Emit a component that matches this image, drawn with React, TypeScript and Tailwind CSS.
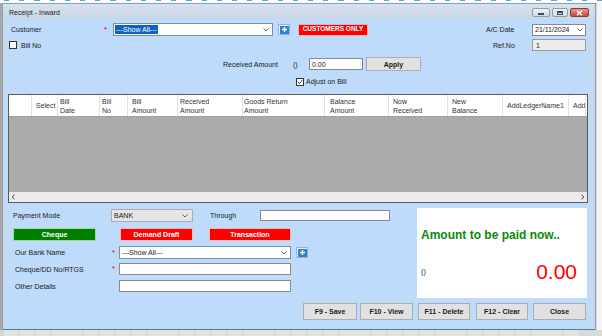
import React from "react";

const Chevron = () => (
  <svg width="6" height="4" viewBox="0 0 6 4" className="shrink-0">
    <path d="M0.5 0.5 L3 3 L5.5 0.5" fill="none" stroke="#555" strokeWidth="0.9" />
  </svg>
);

const PlusBtn = () => (
  <div className="w-[12px] h-[11px] border border-[#9fb4cc] bg-[#e8f0f8] flex items-center justify-center shrink-0">
    <div className="w-[9px] h-[8px] bg-[#2f7fd6] flex items-center justify-center">
      <svg width="7" height="7" viewBox="0 0 7 7">
        <path d="M3.5 1 V6 M1 3.5 H6" stroke="#fff" strokeWidth="1.4" />
      </svg>
    </div>
  </div>
);

const Check = ({ checked }: { checked?: boolean }) => (
  <div className="w-[8px] h-[8px] border border-[#333] bg-white shrink-0 flex items-center justify-center">
    {checked && (
      <svg width="6" height="6" viewBox="0 0 6 6">
        <path d="M0.8 3 L2.4 4.6 L5.2 1.2" fill="none" stroke="#222" strokeWidth="0.9" />
      </svg>
    )}
  </div>
);

const GrayBtn = ({ label, w, ml }: { label: string; w: string; ml: string }) => (
  <div
    className={`${w} ${ml} h-[17px] bg-[#e1e1e1] border border-[#adadad] flex items-center justify-center font-bold text-[7px] text-[#1a1a1a] shrink-0`}
  >
    {label}
  </div>
);

const cols: { t: string[]; w: string; pl: string }[] = [
  { t: [""], w: "w-[23px]", pl: "pl-[0px]" },
  { t: ["Select"], w: "w-[26px]", pl: "pl-[4px]" },
  { t: ["Bill", "Date"], w: "w-[42px]", pl: "pl-[2px]" },
  { t: ["Bill", "No"], w: "w-[28px]", pl: "pl-[2px]" },
  { t: ["Bill", "Amount"], w: "w-[50px]", pl: "pl-[4px]" },
  { t: ["Received", "Amount"], w: "w-[65px]", pl: "pl-[2px]" },
  { t: ["Goods Return", "Amount"], w: "w-[82px]", pl: "pl-[1px]" },
  { t: ["Balance", "Amount"], w: "w-[64px]", pl: "pl-[5px]" },
  { t: ["Now", "Received"], w: "w-[59px]", pl: "pl-[4px]" },
  { t: ["New", "Balance"], w: "w-[55px]", pl: "pl-[4px]" },
  { t: ["AddLedgerName1"], w: "w-[66px]", pl: "pl-[4px]" },
  { t: ["Add"], w: "w-[17px]", pl: "pl-[4px]" },
];

export default function App() {
  return (
    <div className="w-[602px] h-[336px] overflow-hidden bg-[#eeeeee] flex flex-col font-['Liberation_Sans',Arial,sans-serif] text-[7px] leading-none text-[#1a1a1a]">
      {/* top desktop strip */}
      <div className="h-[3px] bg-white flex gap-[10px] pl-[4px] shrink-0">
        {Array.from({ length: 40 }).map((_, i) => (
          <div key={i} className="w-[6px] h-[1px] bg-[#39b4e0]" />
        ))}
      </div>
      <div className="flex h-[327px] shrink-0">
        <div className="w-[2px] bg-[#a9a9a9]" />
        {/* window */}
        <div className="w-[594px] h-[327px] bg-[#c6daee] border border-[#8c9db1] border-b-[#2f8c9e] flex flex-col">
          {/* title bar */}
          <div className="h-[15px] flex items-start bg-gradient-to-b from-[#d6e2ee] to-[#c8d7e8] shrink-0">
            <div className="pl-[6px] pt-[5px] text-[7px] text-[#222]">Receipt - Inward</div>
            <div className="ml-auto mr-[6px] pt-[4px] flex">
              <div className="w-[18px] h-[9px] rounded-[2px] border border-[#8e9cb0] bg-gradient-to-b from-[#eef3f9] to-[#cdd9e6] flex items-center justify-center">
                <div className="w-[6px] h-[2px] bg-[#3c4a5c] mt-[2px]" />
              </div>
              <div className="ml-[2px] w-[16px] h-[9px] rounded-[2px] border border-[#8e9cb0] bg-gradient-to-b from-[#eef3f9] to-[#cdd9e6] flex items-center justify-center">
                <div className="w-[6px] h-[4px] border border-[#3c4a5c] border-t-2" />
              </div>
              <div className="ml-[2px] w-[19px] h-[9px] rounded-[2px] border border-[#8a3a3a] bg-gradient-to-b from-[#e39a8e] to-[#c6473a] flex items-center justify-center">
                <svg width="7" height="6" viewBox="0 0 7 6">
                  <path d="M1 0.8 L6 5.2 M6 0.8 L1 5.2" stroke="#fff" strokeWidth="1.5" />
                </svg>
              </div>
            </div>
          </div>
          {/* client */}
          <div className="ml-[4px] mr-[5px] h-[309px] bg-[#bedbfc] flex flex-col shrink-0">
            {/* row 1 */}
            <div className="mt-[4px] h-[13px] flex items-center">
              <div className="pl-[4px] w-[97px]">Customer</div>
              <div className="w-[9px] text-[#e00] text-[8px]">*</div>
              <div className="w-[160px] h-[13px] bg-white border border-[#7a8ea6] flex items-center pl-[1px] pr-[3px]">
                <span className="bg-[#0a62c9] text-white px-[1px] h-[9px] flex items-center">---Show All---</span>
                <span className="ml-auto"><Chevron /></span>
              </div>
              <div className="ml-[5px]"><PlusBtn /></div>
              <div className="ml-[8px] w-[70px] h-[12px] bg-[#ff0000] border border-[#ffb0b0] text-white font-bold text-[6.5px] flex items-center justify-center">
                CUSTOMERS ONLY
              </div>
              <div className="ml-auto w-[46px]">A/C Date</div>
              <div className="w-[54px] h-[12px] bg-white border border-[#8a8a8a] mr-[4px] flex items-center pl-[2px] pr-[2px]">
                <span>21/11/2024</span>
                <span className="ml-auto"><Chevron /></span>
              </div>
            </div>
            {/* row 2 */}
            <div className="mt-[3px] h-[12px] flex items-center">
              <div className="ml-[2px]"><Check /></div>
              <div className="ml-[4px]">Bill No</div>
              <div className="ml-auto w-[46px] pl-[7px]">Ref.No</div>
              <div className="w-[54px] h-[12px] bg-[#ececec] border border-[#9a9a9a] mr-[4px] flex items-center pl-[3px]">1</div>
            </div>
            {/* row 3 */}
            <div className="mt-[6px] h-[14px] flex items-center">
              <div className="ml-[216px] w-[70px]">Received Amount</div>
              <div className="w-[16px]">()</div>
              <div className="w-[54px] h-[12px] bg-white border border-[#8a8a8a] flex items-center pl-[2px]">0.00</div>
              <div className="ml-[3px] w-[55px] h-[14px] bg-[#e1e1e1] border border-[#adadad] flex items-center justify-center font-bold">Apply</div>
            </div>
            {/* row 4 */}
            <div className="mt-[6px] h-[9px] flex items-center">
              <div className="ml-[289px]"><Check checked /></div>
              <div className="ml-[2px]">Adjust on Bill</div>
            </div>
            {/* grid */}
            <div className="mt-[8px] ml-[1px] w-[580px] h-[109px] border border-[#5a5a5a] flex flex-col overflow-hidden">
              <div className="h-[22px] bg-white flex border-b border-[#a0a0a0] shrink-0 overflow-hidden">
                {cols.map((c, i) => (
                  <div
                    key={i}
                    className={`${c.w} ${c.pl} shrink-0 h-full flex flex-col justify-center text-[#333] border-r border-[#e2e2e2] leading-[9px] whitespace-nowrap overflow-hidden`}
                  >
                    {c.t.map((l, j) => (
                      <div key={j}>{l}</div>
                    ))}
                  </div>
                ))}
              </div>
              <div className="flex-1 bg-[#ababab]" />
              <div className="h-[10px] bg-[#ececec] flex items-center justify-between px-[2px] shrink-0">
                <svg width="5" height="6" viewBox="0 0 5 6"><path d="M3.5 0.8 L1.2 3 L3.5 5.2" fill="none" stroke="#333" strokeWidth="1" /></svg>
                <svg width="5" height="6" viewBox="0 0 5 6"><path d="M1.5 0.8 L3.8 3 L1.5 5.2" fill="none" stroke="#333" strokeWidth="1" /></svg>
              </div>
            </div>
            {/* bottom section */}
            <div className="mt-[5px] flex">
              <div className="w-[410px] flex flex-col">
                <div className="mt-[1px] h-[13px] flex items-center">
                  <div className="pl-[6px] w-[104px]">Payment Mode</div>
                  <div className="w-[82px] h-[13px] bg-[#e5e5e5] border border-[#acacac] flex items-center pl-[2px] pr-[4px]">
                    <span>BANK</span>
                    <span className="ml-auto"><Chevron /></span>
                  </div>
                  <div className="ml-[17px] w-[50px]">Through</div>
                  <div className="w-[130px] h-[11px] bg-white border border-[#8a8a8a]" />
                </div>
                <div className="mt-[6px] h-[13px] flex items-center">
                  <div className="ml-[6px] w-[83px] h-[13px] bg-[#008000] border border-[#9fd89f] text-white font-bold flex items-center justify-center">Cheque</div>
                  <div className="ml-[24px] w-[73px] h-[13px] bg-[#ff0000] border border-[#ffb3b3] text-white font-bold flex items-center justify-center">Demand Draft</div>
                  <div className="ml-[16px] w-[82px] h-[13px] bg-[#ff0000] border border-[#ffb3b3] text-white font-bold flex items-center justify-center">Transaction</div>
                </div>
                <div className="mt-[5px] h-[13px] flex items-center">
                  <div className="pl-[8px] w-[105px]">Our Bank Name</div>
                  <div className="w-[7px] text-[#e00] text-[8px]">*</div>
                  <div className="w-[172px] h-[13px] bg-white border border-[#7a8ea6] flex items-center pl-[2px] pr-[3px]">
                    <span>---Show All---</span>
                    <span className="ml-auto"><Chevron /></span>
                  </div>
                  <div className="ml-[5px]"><PlusBtn /></div>
                </div>
                <div className="mt-[4px] h-[12px] flex items-center">
                  <div className="pl-[8px] w-[105px]">Cheque/DD No/RTGS</div>
                  <div className="w-[7px] text-[#e00] text-[8px]">*</div>
                  <div className="w-[172px] h-[12px] bg-white border border-[#8a8a8a]" />
                </div>
                <div className="mt-[5px] h-[12px] flex items-center">
                  <div className="pl-[8px] w-[112px]">Other Details</div>
                  <div className="w-[172px] h-[12px] bg-white border border-[#8a8a8a]" />
                </div>
              </div>
              <div className="w-[170px] h-[90px] bg-white flex flex-col pl-[4px] pr-[10px]">
                <div className="mt-[21px] text-[12px] font-bold text-[#0a8a0a] leading-[12px]">Amount to be paid now..</div>
                <div className="mt-[19px] flex items-center h-[24px]">
                  <span className="text-[7.5px] text-[#222]">()</span>
                  <span className="ml-auto text-[21px] text-[#ff0000] leading-[24px]">0.00</span>
                </div>
              </div>
            </div>
            {/* buttons */}
            <div className="mt-[5px] flex">
              <GrayBtn label="F9 - Save" w="w-[54px]" ml="ml-[296px]" />
              <GrayBtn label="F10 - View" w="w-[53px]" ml="ml-[3px]" />
              <GrayBtn label="F11 - Delete" w="w-[52px]" ml="ml-[5px]" />
              <GrayBtn label="F12 - Clear" w="w-[52px]" ml="ml-[6px]" />
              <GrayBtn label="Close" w="w-[53px]" ml="ml-[5px]" />
            </div>
          </div>
        </div>
        <div className="w-[6px] bg-[#f4f4f4] border-l border-[#d8d8d8]" />
      </div>
      {/* bottom desktop strip */}
      <div className="h-[6px] flex gap-[2px] bg-[#d9d9d9] pl-[4px] shrink-0">
        {Array.from({ length: 30 }).map((_, i) => (
          <div key={i} className={`h-[6px] ${i % 5 === 3 ? "w-[30px]" : "w-[14px]"} bg-[#e4e4e4]`} />
        ))}
      </div>
    </div>
  );
}
